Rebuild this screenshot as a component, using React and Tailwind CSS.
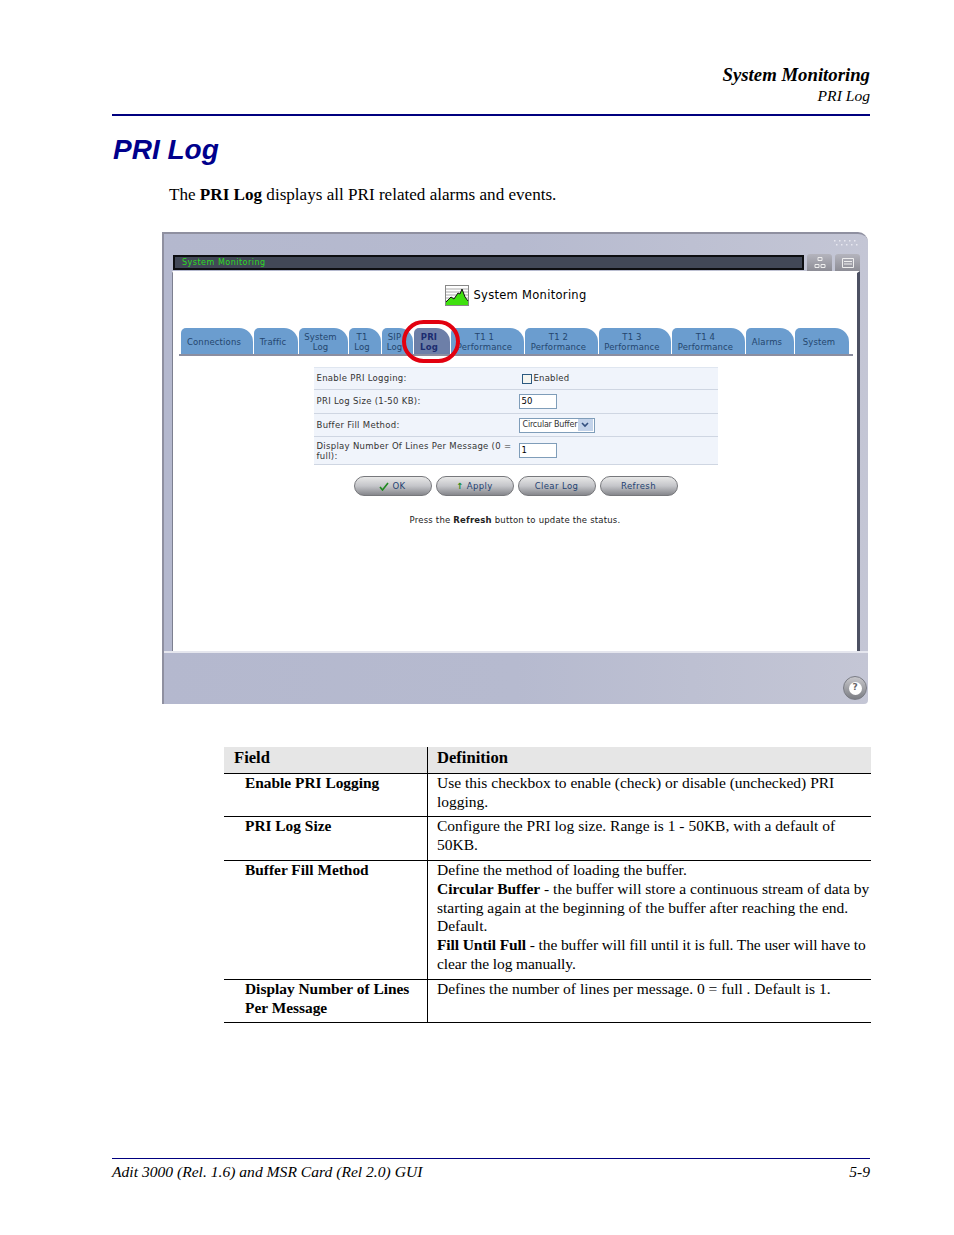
const tabs = [
  { label: ["Connections"], w: "w-[72px]" },
  { label: ["Traffic"], w: "w-[44px]" },
  { label: ["System", "Log"], w: "w-[49px]" },
  { label: ["T1", "Log"], w: "w-[32px]" },
  { label: ["SIP", "Log"], w: "w-[31px]" },
  { label: ["PRI", "Log"], w: "w-[36px]", active: true },
  { label: ["T1 1", "Performance"], w: "w-[73px]" },
  { label: ["T1 2", "Performance"], w: "w-[73px]" },
  { label: ["T1 3", "Performance"], w: "w-[72px]" },
  { label: ["T1 4", "Performance"], w: "w-[73px]" },
  { label: ["Alarms"], w: "w-[48px]" },
  { label: ["System"], w: "w-[54px]" },
]

const rows = [
  {
    field: ["Enable PRI Logging"],
    height: "h-[43px]",
    def: <p>Use this checkbox to enable (check) or disable (unchecked) PRI logging.</p>,
  },
  {
    field: ["PRI Log Size"],
    height: "h-[44px]",
    def: <p>Configure the PRI log size. Range is 1 - 50KB, with a default of 50KB.</p>,
  },
  {
    field: ["Buffer Fill Method"],
    height: "h-[119px]",
    def: (
      <>
        <p>Define the method of loading the buffer.</p>
        <p><b>Circular Buffer</b> - the buffer will store a continuous stream of data by starting again at the beginning of the buffer after reaching the end. Default.</p>
        <p className="tracking-[-0.1px]"><b>Fill Until Full</b> - the buffer will fill until it is full. The user will have to clear the log manually.</p>
      </>
    ),
  },
  {
    field: ["Display Number of Lines", "Per Message"],
    height: "h-[43px]",
    def: <p>Defines the number of lines per message. 0 = full . Default is 1.</p>,
  },
]

function ChartIcon() {
  return (
    <svg width="24" height="21" viewBox="0 0 24 21">
      <rect x="0.5" y="0.5" width="23" height="20" fill="#fff" stroke="#888" />
      <path d="M1 4h22M1 7h22M1 10h22M1 13h22M1 16h22" stroke="#aaa" strokeWidth="1" />
      <path d="M1 20V17L6 12L9 14L13 8L15 9L17 4L20 12L23 16V20Z" fill="#3fe00f" />
      <path d="M1 17L6 12L9 14L13 8L15 9L17 4L20 12L23 16" fill="none" stroke="#111" strokeWidth="1" />
    </svg>
  )
}

function GripDots() {
  return (
    <svg width="26" height="6" viewBox="0 0 26 6" fill="#e8e8f0">
      <path d="M1 0h1.500v1.500H1zM6 0h1.500v1.500H6zM11 0h1.500v1.500H11zM16 0h1.500v1.500H16zM21 0h1.500v1.500H21z" />
      <path d="M3 4h1.500v1.500H3zM8 4h1.500v1.500H8zM13 4h1.500v1.500H13zM18 4h1.500v1.500H18zM23 4h1.500v1.500H23z" />
    </svg>
  )
}

function PillButton({ children, icon }) {
  return (
    <div className="w-[78px] h-[20px] rounded-full border border-[#77787c] bg-gradient-to-b from-[#e8e8e8] via-[#c4c5c9] to-[#86878c] flex items-center justify-center gap-[3px] text-[8.5px] tracking-[0.4px] text-[#1f4272]">
      {icon}
      {children}
    </div>
  )
}

function FormRow({ label, height, children, two }) {
  return (
    <div className={`flex items-center bg-[#f0f4fb] border-b border-[#cfd6e2] pl-[3px] ${height}`}>
      <div className={`w-[199px] shrink-0 text-[8.5px] tracking-[0.3px] text-[#333] ${two ? "leading-[10px]" : ""}`}>{label}</div>
      {children}
    </div>
  )
}

export default function App() {
  return (
    <div className="relative w-[954px] h-[1235px] bg-white flex flex-col pl-[112px] pr-[84px] pt-[65px] text-black font-['Liberation_Serif',serif] overflow-hidden">
      <header className="text-right italic border-b-2 border-[#00007f] h-[51px]">
        <div className="font-bold text-[18.75px] leading-[20px]">System Monitoring</div>
        <div className="text-[15.6px] leading-[20px] mt-[1px]">PRI Log</div>
      </header>

      <h1 className="ml-[1px] font-['Liberation_Sans',sans-serif] italic font-bold text-[28px] leading-[32px] text-[#00008c] mt-[18px]">PRI Log</h1>

      <p className="ml-[57px] mt-[19px] text-[17.1px] leading-[20px]">
        The <b>PRI Log</b> displays all PRI related alarms and events.
      </p>

      {/* embedded GUI screenshot */}
      <div className="relative ml-[50px] mt-[27px] w-[706px] h-[472px] flex flex-col bg-gradient-to-r from-[#b4b8ce] via-[#b6bacf] to-[#c4c6d5] border-t-2 border-l-2 border-[#8f90a0] rounded-tr-[10px] rounded-br-[4px] font-['DejaVu_Sans',sans-serif]">
        <div className="flex items-center h-[17px] mt-[20px] pl-[9px] pr-[7px] gap-[3px] shrink-0">
          <div className="w-[631px] h-[15px] bg-[#424857] border-2 border-black/80 flex items-center pl-[7px] text-[8px] tracking-[0.5px] text-[#2bdc20]">
            System Monitoring
          </div>
          <div className="w-[25px] h-[17px] rounded-t-[3px] bg-gradient-to-b from-[#b4b4bd] to-[#8d8d96] flex items-center justify-center">
            <svg width="12" height="11" viewBox="0 0 12 11" fill="none" stroke="#eee"><path d="M4 .5h4v3H4zM1 7.5h4v3H1zM7 7.5h4v3H7z" /></svg>
          </div>
          <div className="w-[25px] h-[17px] rounded-t-[3px] bg-gradient-to-b from-[#b4b4bd] to-[#8d8d96] flex items-center justify-center">
            <svg width="12" height="10" viewBox="0 0 12 10" fill="none" stroke="#eee"><path d="M.5.5h11v9H.5zM2 3.5h8M2 6h8" /></svg>
          </div>
        </div>

        <div className="absolute top-[6px] right-[9px]">
          <GripDots />
        </div>

        <div className="mx-[8px] h-[380px] shrink-0 bg-white border-l border-t-2 border-t-white border-l-[#7d8090] border-r-[3px] border-r-[#4c5062] flex flex-col items-center">
          <div className="flex items-center gap-[4px] mt-[12px] h-[21px] ml-[2px]">
            <ChartIcon />
            <span className="text-[11.5px] tracking-[0.3px] text-black">System Monitoring</span>
          </div>

          <div className="self-start ml-[6px] mt-[22px] w-[674px] flex items-end gap-[1px] h-[28px] border-b-2 border-[#8b8ea0] pl-[2px]">
            {tabs.map((t) => (
              <div
                key={t.label.join(" ")}
                className={`${t.w} h-[26px] pr-[6px] pt-[1px] rounded-tl-[5px] rounded-tr-[14px] flex flex-col items-center justify-center text-[8.5px] leading-[10px] tracking-[0.15px] shrink-0 whitespace-nowrap overflow-hidden ${t.active ? "bg-[#6d7fa8] text-[#1c2c70] font-bold" : "bg-[#6b9dcf] text-[#24466e]"}`}
              >
                {t.label.map((l) => (
                  <span key={l}>{l}</span>
                ))}
              </div>
            ))}
          </div>

          <div className="mt-[11px] w-[404px] ml-[1px] border-t border-[#dfe6f0]">
            <FormRow label="Enable PRI Logging:" height="h-[22px]">
              <div className="w-[10px] h-[10px] ml-[6px] border border-[#2c5a80] bg-[#f5f5f0]" />
              <span className="ml-[2px] text-[8.5px] tracking-[0.2px] text-[#333]">Enabled</span>
            </FormRow>
            <FormRow label="PRI Log Size (1-50 KB):" height="h-[24px]">
              <div className="w-[38px] h-[15px] ml-[3px] border border-[#7f9db9] bg-white pl-[2px] text-[8.5px] leading-[13px] text-black">50</div>
            </FormRow>
            <FormRow label="Buffer Fill Method:" height="h-[23px]">
              <div className="w-[76px] h-[15px] ml-[3px] border border-[#7f9db9] bg-white flex items-center pl-[3px] pr-[1px] text-[8px] text-[#333]">
                <span className="flex-1 min-w-0 whitespace-nowrap tracking-[-0.2px]">Circular Buffer</span>
                <span className="w-[15px] h-[12px] bg-[#c3d3ea] flex items-center justify-center shrink-0">
                  <svg width="8" height="6" viewBox="0 0 8 6" fill="none" stroke="#33507f" strokeWidth="1.6"><path d="M1 1l3 3 3-3" /></svg>
                </span>
              </div>
            </FormRow>
            <FormRow label="Display Number Of Lines Per Message (0 = full):" height="h-[28px]" two>
              <div className="w-[38px] h-[15px] ml-[3px] border border-[#7f9db9] bg-white pl-[2px] text-[8.5px] leading-[13px] text-black">1</div>
            </FormRow>
          </div>

          <div className="flex gap-[4px] mt-[11px] ml-[1px]">
            <PillButton icon={<svg width="10" height="9" viewBox="0 0 10 9" fill="none" stroke="#1f8a1f" strokeWidth="1.6"><path d="M1 5l2.5 3L9 1" /></svg>}>OK</PillButton>
            <PillButton icon={<span className="text-[#1f8a1f] font-bold">↑</span>}>Apply</PillButton>
            <PillButton>Clear Log</PillButton>
            <PillButton>Refresh</PillButton>
          </div>

          <p className="mt-[19px] text-[8.5px] leading-[11px] tracking-[0.2px] text-[#222]">
            Press the <b>Refresh</b> button to update the status.
          </p>
        </div>

        <div className="relative flex-1 border-t-2 border-[#e5e6ee]">
          <div className="absolute right-[1px] bottom-[4px] w-[24px] h-[24px] rounded-full bg-gradient-to-b from-[#c8c8cc] to-[#7c7e84] border border-[#7a7c84] flex items-center justify-center">
            <span className="w-[13px] h-[13px] rounded-full bg-white flex items-center justify-center text-[9px] font-bold text-[#666]">?</span>
          </div>
        </div>

        {/* red marker drawn over the tabs */}
        <div className="absolute left-[238px] top-[86px] w-[58px] h-[43px] rounded-full border-[4px] border-[#e2000f]" />
      </div>

      <div className="ml-[112px] mt-[43px] w-[647px] text-[15.5px] leading-[18.8px]">
        <div className="flex h-[27px] bg-[#e6e6e6] border-b border-black font-bold text-[16.6px] leading-[20px]">
          <div className="w-[204px] border-r border-black pl-[10px] pt-[1px]">Field</div>
          <div className="pl-[9px] pt-[1px]">Definition</div>
        </div>
        {rows.map((r) => (
          <div key={r.field[0]} className={`flex border-b border-black ${r.height}`}>
            <div className="w-[204px] shrink-0 border-r border-black pl-[21px] font-bold text-[15.4px]">
              {r.field.map((f) => (
                <div key={f}>{f}</div>
              ))}
            </div>
            <div className="pl-[9px]">{r.def}</div>
          </div>
        ))}
      </div>

      <footer className="mt-auto mb-[53px] border-t border-[#00007f] flex justify-between italic text-[15.6px] leading-[20px] pt-[3px]">
        <span>Adit 3000 (Rel. 1.6) and MSR Card (Rel 2.0) GUI</span>
        <span>5-9</span>
      </footer>
    </div>
  )
}
